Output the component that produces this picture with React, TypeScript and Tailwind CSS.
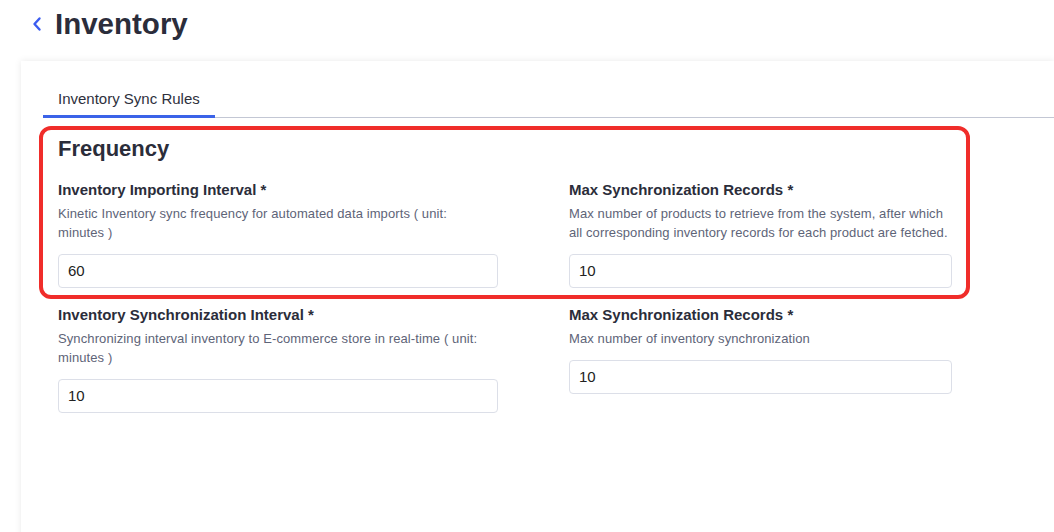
import React from "react";

function Field({ label, desc, value, width, descWidth }: { label: string; desc: string; value: string; width: string; descWidth: string }) {
  return (
    <div className={`flex flex-col ${width}`}>
      <div className="text-[15px] leading-[20px] font-bold text-[#2b2d3a]">{label}</div>
      <div className={`mt-[4px] ${descWidth} text-[13px] leading-[19px] tracking-[0.1px] text-[#5e6478]`}>{desc}</div>
      <div className="mt-auto pt-[12px]">
        <div className="h-[34px] rounded-[4px] border border-[#dcdfe8] bg-white px-[9px] flex items-center text-[15px] text-[#222]">
          {value}
        </div>
      </div>
    </div>
  );
}

export default function App() {
  return (
    <div className="relative w-[1054px] h-[532px] overflow-hidden bg-white" style={{ fontFamily: '"Liberation Sans", Arial, sans-serif' }}>
      <div className="flex items-center h-[46px] pl-[31px] pt-[1px]">
        <svg width="12" height="16" viewBox="0 0 12 16" className="mr-[12px]">
          <polyline points="8.5,2.5 3.5,8 8.5,13.5" fill="none" stroke="#3b5cf0" strokeWidth="2.4" strokeLinecap="round" strokeLinejoin="round" />
        </svg>
        <h1 className="text-[29.5px] leading-[34px] font-bold text-[#2b2d3b]">Inventory</h1>
      </div>
      <div className="ml-[21px] mt-[15px] h-[500px] bg-white shadow-[0_0_7px_rgba(0,0,0,0.09)] pl-[22px] pt-[28px]">
        <div className="flex border-b border-[#c3c7d4]">
          <div className="px-[15px] pb-[6px] border-b-[3px] border-[#3b63e8] -mb-[1px] text-[15px] leading-[20px] text-[#2e303c]">
            Inventory Sync Rules
          </div>
        </div>
        <div className="pl-[15px] pt-[17px]">
          <h2 className="text-[22px] leading-[28px] font-bold text-[#2b2d3a]">Frequency</h2>
          <div className="mt-[17px] grid grid-cols-[440px_383px] gap-x-[71px] gap-y-[17px]">
            <Field
              width="w-[440px]"
              descWidth="max-w-[430px]"
              label="Inventory Importing Interval *"
              desc="Kinetic Inventory sync frequency for automated data imports ( unit: minutes )"
              value="60"
            />
            <Field
              width="w-[383px]"
              descWidth="w-[390px]"
              label="Max Synchronization Records *"
              desc="Max number of products to retrieve from the system, after which all corresponding inventory records for each product are fetched."
              value="10"
            />
            <Field
              width="w-[440px]"
              descWidth="max-w-[430px]"
              label="Inventory Synchronization Interval *"
              desc="Synchronizing interval inventory to E-commerce store in real-time ( unit: minutes )"
              value="10"
            />
            <div className="self-start">
              <Field
                width="w-[383px]"
                descWidth="w-[390px]"
                label="Max Synchronization Records *"
                desc="Max number of inventory synchronization"
                value="10"
              />
            </div>
          </div>
        </div>
      </div>
      <div className="absolute left-[39px] top-[126px] w-[931px] h-[173px] rounded-[12px] border-[4px] border-[#f02d2a] pointer-events-none" />
    </div>
  );
}
